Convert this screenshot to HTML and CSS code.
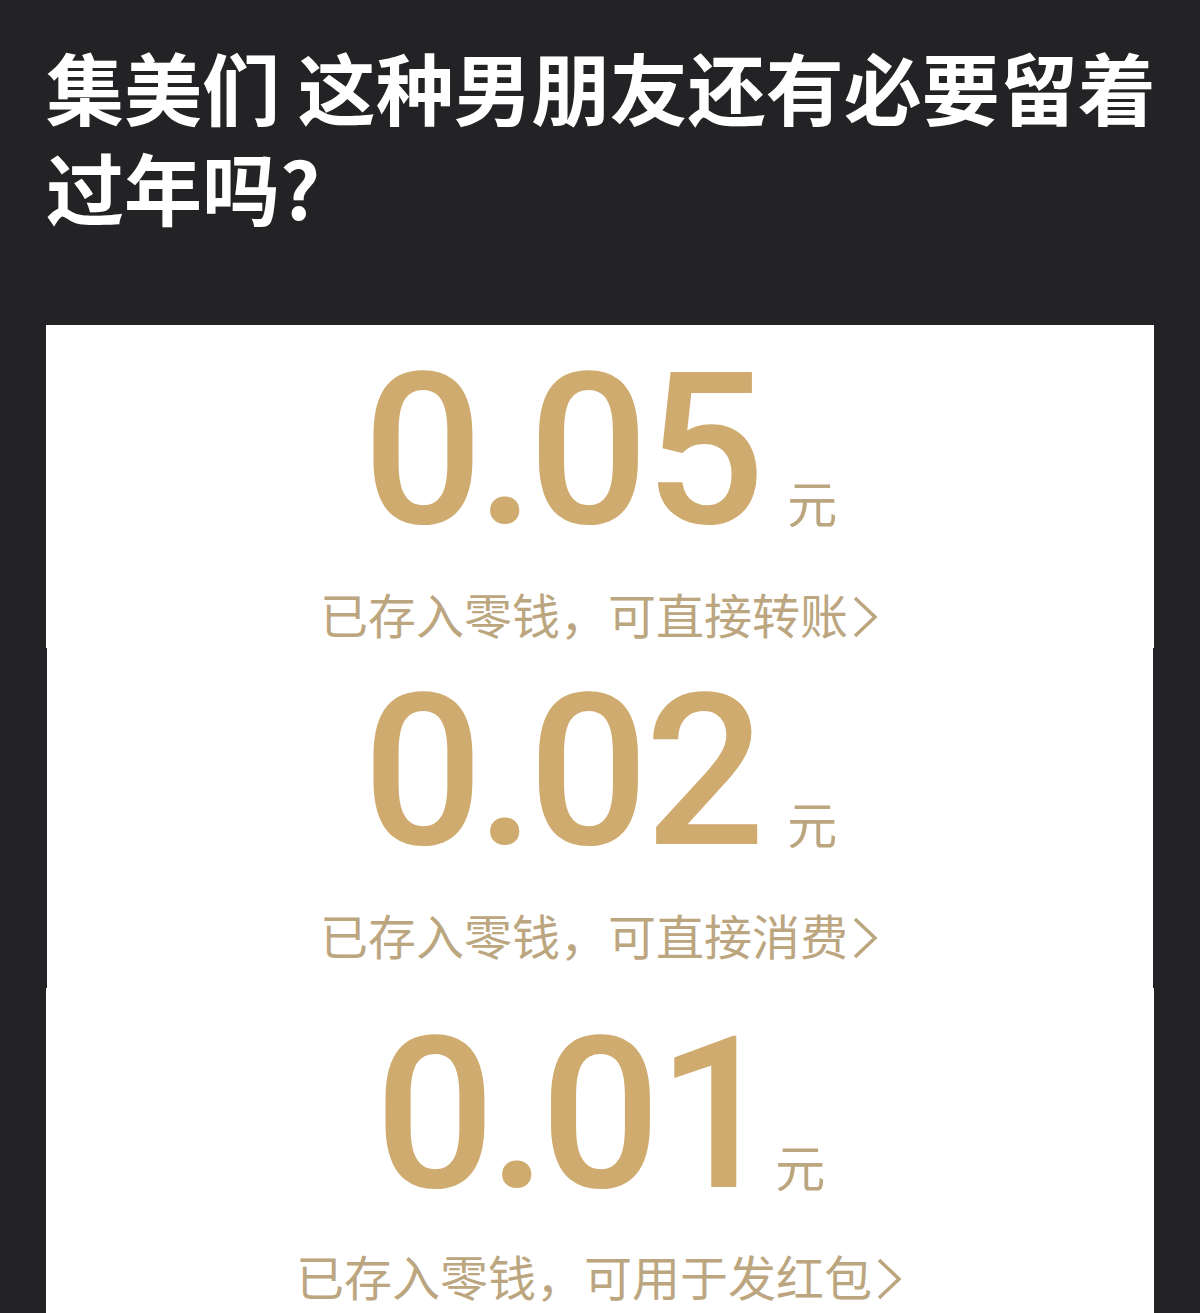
FILE: index.html
```html
<!DOCTYPE html>
<html lang="zh-CN">
<head>
    <meta charset="UTF-8">
    <meta name="viewport" content="width=device-width, initial-scale=1.0">
    <title>集美们 这种男朋友还有必要留着过年吗?</title>
    <link rel="stylesheet" href="styles.css">
</head>
<body>
    <h1 class="title">集美们 这种男朋友还有必要留着过年吗?</h1>

    <div class="shots">
        <!-- first screenshot -->
        <div class="shot shot-one">
            <div class="amount">0<span class="dot">.</span>05<span class="unit">元</span></div>
            <div class="note">已存入零钱，可直接转账<svg class="arrow" viewBox="0 0 30 46"><polyline points="5,4 25,23 5,42"/></svg></div>
        </div>
        <!-- second screenshot -->
        <div class="shot shot-two">
            <div class="amount">0<span class="dot">.</span>02<span class="unit">元</span></div>
            <div class="note">已存入零钱，可直接消费<svg class="arrow" viewBox="0 0 30 46"><polyline points="5,4 25,23 5,42"/></svg></div>
        </div>
        <!-- third screenshot -->
        <div class="shot shot-three">
            <div class="amount">0<span class="dot">.</span>01<span class="unit">元</span></div>
            <div class="note">已存入零钱，可用于发红包<svg class="arrow" viewBox="0 0 30 46"><polyline points="5,4 25,23 5,42"/></svg></div>
        </div>
    </div>
</body>
</html>
```

FILE: styles.css
```css
body{
    margin: 0;
    background-color: #232325;
    font-family: "Noto Sans CJK SC", "Noto Sans", sans-serif;
    overflow: hidden;
}
.title{
    margin: 36px 30px 0 46px;
    font-size: 78px;
    line-height: 100px;
    font-weight: 700;
    color: #ffffff;
}
.shots{
    margin-top: 89px;
}
.shot{
    background-color: #ffffff;
    margin: 0 46px;
    text-align: center;
    box-sizing: border-box;
}
.shot-one{
    height: 323px;
    padding-top: 46px;
}
.shot-two{
    height: 340px;
    padding-top: 44px;
    margin: 0 47px;
}
.shot-three{
    height: 400px;
    padding-top: 47px;
}

.amount{
    font-family: Roboto, "Liberation Sans", sans-serif;
    font-weight: 500;
    font-size: 212px;
    line-height: 160px;
    letter-spacing: -4px;
    color: #cfab6f;
    white-space: nowrap;

    .dot{
        margin: 0 -3px;
    }
    .unit{
        font-family: "Noto Sans CJK SC", sans-serif;
        font-weight: 400;
        font-size: 50px;
        line-height: 1;
        letter-spacing: 0;
        color: #bca67f;
        margin-left: 26px;
    }
}
.shot-three .amount .unit{
    margin-left: 2px;
}

.note{
    margin-top: 50px;
    font-size: 48px;
    line-height: 64px;
    color: #bba680;
    white-space: nowrap;

    .arrow{
        width: 30px;
        height: 46px;
        margin-left: 2px;
        vertical-align: -6px;
        fill: none;
        stroke: #bba680;
        stroke-width: 3.5;
    }
}
.shot-three .note{
    margin-top: 48px;
}
```
